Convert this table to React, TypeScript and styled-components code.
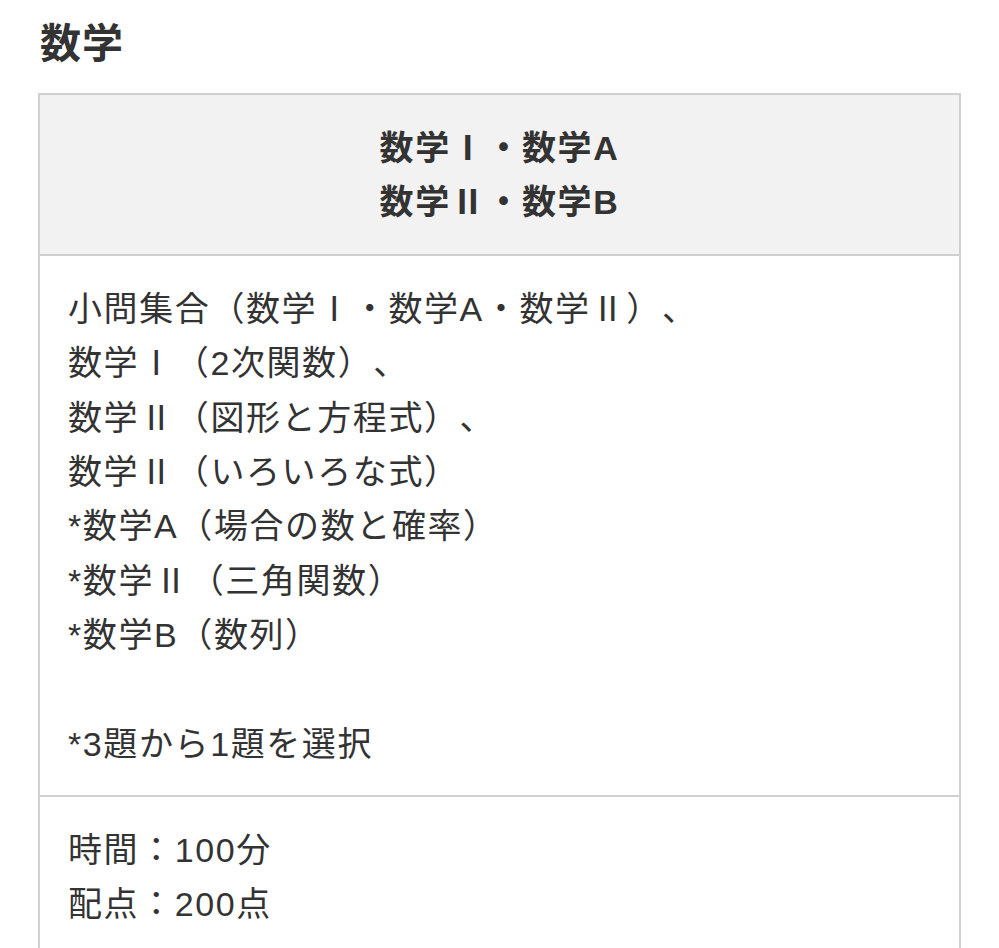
import React from 'react';
import styled, { createGlobalStyle } from 'styled-components';

const GlobalStyle = createGlobalStyle`
  html, body {
    margin: 0;
    padding: 0;
    background: #fff;
  }
  body {
    font-family: "Liberation Sans", "Noto Sans CJK JP", sans-serif;
    color: #333;
    text-spacing-trim: space-all;
  }
`;

const Page = styled.div`
  padding: 15px 38px 0 38px;
`;

const Heading = styled.h2`
  margin: 0 0 0 2px;
  font-family: "Noto Sans CJK JP", sans-serif;
  font-size: 41px;
  font-weight: bold;
  line-height: 50px;
  letter-spacing: 1px;
  color: #333;
`;

const Table = styled.div`
  margin-top: 28px;
  border: 2px solid #d0d0d0;
  display: flex;
  flex-direction: column;
`;

const Cell = styled.div<{ $head?: boolean }>`
  padding: 26px 28px 24px;
  font-size: 34px;
  line-height: 1.6;
  letter-spacing: 1.6px;
  color: #333;
  background: ${(p) => (p.$head ? '#f2f2f2' : '#fff')};
  font-weight: ${(p) => (p.$head ? 'bold' : 'normal')};
  text-align: ${(p) => (p.$head ? 'center' : 'left')};
  & + & {
    border-top: 2px solid #d0d0d0;
  }
`;

const Line = styled.div<{ $gap?: boolean }>`
  margin-top: ${(p) => (p.$gap ? '54px' : '0')};
`;

const App: React.FC = () => {
  return (
    <>
      <GlobalStyle />
      <Page>
        <Heading>数学</Heading>
        <Table>
          <Cell $head>
            <Line>数学Ⅰ・数学A</Line>
            <Line>数学Ⅱ・数学B</Line>
          </Cell>
          <Cell>
            <Line>小問集合（数学Ⅰ・数学A・数学Ⅱ）、</Line>
            <Line>数学Ⅰ（2次関数）、</Line>
            <Line>数学Ⅱ（図形と方程式）、</Line>
            <Line>数学Ⅱ（いろいろな式）</Line>
            <Line>*数学A（場合の数と確率）</Line>
            <Line>*数学Ⅱ（三角関数）</Line>
            <Line>*数学B（数列）</Line>
            <Line $gap>*3題から1題を選択</Line>
          </Cell>
          <Cell>
            <Line>時間：100分</Line>
            <Line>配点：200点</Line>
          </Cell>
        </Table>
      </Page>
    </>
  );
};

export default App;
